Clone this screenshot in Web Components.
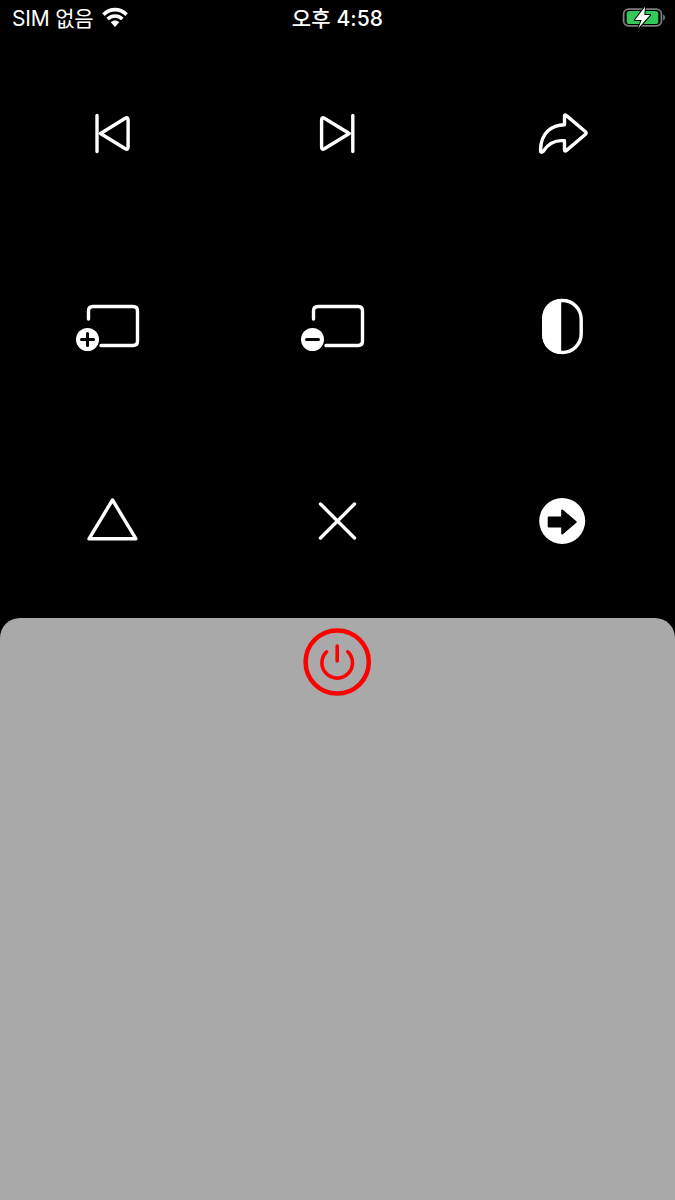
<!DOCTYPE html>
<html lang="ko">
<head>
<meta charset="utf-8">
<title>Remote</title>
<style>
html,body{margin:0;height:100%;background:#000}
body{font-family:Inter,"Noto Sans CJK KR",sans-serif;overflow:hidden}
remote-app{height:1200px}
</style>
</head>
<body>
<remote-app>
  <status-bar slot="status" carrier="SIM 없음" time="오후 4:58"></status-bar>
  <icon-grid slot="grid">
    <icon-key name="prev"></icon-key>
    <icon-key name="next"></icon-key>
    <icon-key name="share"></icon-key>
    <icon-key name="plus"></icon-key>
    <icon-key name="minus"></icon-key>
    <icon-key name="contrast"></icon-key>
    <icon-key name="triangle"></icon-key>
    <icon-key name="cross"></icon-key>
    <icon-key name="go"></icon-key>
  </icon-grid>
  <power-panel slot="panel"></power-panel>
</remote-app>
<script>
/* ---- page frame: status bar, key grid, bottom sheet ---- */
class RemoteApp extends HTMLElement {
  connectedCallback() {
    if (this.shadowRoot) return;
    const root = this.attachShadow({ mode: 'open' });
    root.innerHTML = `<style>
:host{display:grid;grid-template-rows:36px 582px 1fr;background:#000}
</style><slot name="status"></slot><slot name="grid"></slot><slot name="panel"></slot>`;
  }
}
customElements.define('remote-app', RemoteApp);

class StatusBar extends HTMLElement {
  connectedCallback() {
    if (this.shadowRoot) return;
    const root = this.attachShadow({ mode: 'open' });
    root.innerHTML = `<style>
:host{display:grid;grid-template-columns:1fr auto 1fr;align-items:center;height:36px;padding:0 9px;color:#fff;font-size:21px;box-sizing:border-box}
.l{display:flex;align-items:center;gap:8px;letter-spacing:-.2px;margin-left:3px}
.l span,.c{position:relative;top:-1px}
.c{font-weight:500;letter-spacing:.1px}
.r{justify-self:end;display:flex;align-items:center}
svg{display:block}
</style>
<div class="l"><span>${this.getAttribute('carrier')}</span>
<svg width="28" height="24" viewBox="0 0 28 24"><path d="M2.400 8.600C9.400 2 18.600 2 25.600 8.600M6.600 13C11 9 17 9 21.400 13" fill="none" stroke="#fff" stroke-width="3.600"/><path d="M9.800 16.200C12.400 14 15.600 14 18.200 16.200L14 21Z" fill="#fff"/></svg></div>
<div class="c">${this.getAttribute('time')}</div>
<div class="r"><svg width="44" height="24" viewBox="0 0 44 24"><rect x="1.600" y="3.200" width="37.800" height="16.600" rx="5" fill="none" stroke="#7d7d7d" stroke-width="1.800"/><rect x="4.700" y="5" width="31.600" height="13" rx="2.800" fill="#34c759"/><path d="M41 8.500c1.600.5 2.200 1.700 2.200 3s-.6 2.500-2.200 3z" fill="#6a6a6a"/><path d="M23 .7 13 14H19.700L16.300 22.300 28 9H22.300Z" fill="#fff" stroke="#000" stroke-width="2" stroke-linejoin="round" paint-order="stroke"/></svg></div>`;
  }
}
customElements.define('status-bar', StatusBar);

class IconGrid extends HTMLElement {
  connectedCallback() {
    if (this.shadowRoot) return;
    const root = this.attachShadow({ mode: 'open' });
    root.innerHTML = `<style>
:host{display:grid;grid-template-columns:repeat(3,1fr);grid-auto-rows:194px}
</style><slot></slot>`;
  }
}
customElements.define('icon-grid', IconGrid);

/* every glyph is drawn around 0,0 = the middle of its cell */
var ICONS = {
  prev: '<path class="s" d="M-16-17.500V18.500M-12.500 .5 12.300-14.700Q15.100-16.300 15.100-13.100V14.100Q15.100 17.300 12.300 15.700Z"/>',
  next: '<path class="s" d="M14.800-17.500V18.500M11.300 .5-13.600-14.700Q-16.400-16.300-16.400-13.100V14.100Q-16.400 17.300-13.600 15.700Z"/>',
  share: '<path class="s" d="M1.500-16.500Q1.500-19 3.500-17.400L22.500-1.200Q23.800 0 22.500 1.200L3.500 17.400Q1.500 19 1.500 16.500V7.800C-8 6.800-15 11-19.500 18Q-22.500 21-22.500 17C-22-1-11-8 1.500-8.200Z"/>',
  plus: '<path class="s" d="M-24.500-8V-16Q-24.500-20.500-20-20.500H20Q24.500-20.500 24.500-16V14Q24.500 18.500 20 18.500H-12"/><circle cx="-25.500" cy="12.500" r="11.500" fill="#fff"/><path d="M-25.500 6.500V18.500M-31.500 12.500H-19.500" stroke="#000" stroke-width="3" fill="none" stroke-linecap="round"/>',
  minus: '<path class="s" d="M-24.500-8V-16Q-24.500-20.500-20-20.500H20Q24.500-20.500 24.500-16V14Q24.500 18.500 20 18.500H-12"/><circle cx="-25.500" cy="12.500" r="11.500" fill="#fff"/><path d="M-31.500 12.500H-19.500" stroke="#000" stroke-width="3" fill="none" stroke-linecap="round"/>',
  contrast: '<rect class="s" x="-19.300" y="-26.500" width="37.500" height="52" rx="18.700"/><path d="M-1.800-28C-13-28-20.800-20-20.800-8.500V7.500C-20.800 19-13 27-1.800 27Z" fill="#fff"/>',
  triangle: '<path class="s" d="M-.5-21-24 17.800H23Z"/>',
  cross: '<path class="s" d="M-17.500-17 16.500 17M16.500-17-17.500 17"/>',
  go: '<circle cx="-.8" cy="0" r="23" fill="#fff"/><path d="M-14.300-3.500H-.8V-10.500L12.700 1-.8 12.500V5.500H-14.300Z" fill="#000" stroke="#000" stroke-width="2" stroke-linejoin="round"/>'
};
class IconKey extends HTMLElement {
  connectedCallback() {
    if (this.shadowRoot) return;
    const root = this.attachShadow({ mode: 'open' });
    root.innerHTML = `<style>
:host{display:flex;align-items:center;justify-content:center}
svg{display:block;overflow:visible}
.s{fill:none;stroke:#fff;stroke-width:3.400;stroke-linecap:round;stroke-linejoin:round}
</style><svg width="70" height="70" viewBox="-35 -35 70 70">${ICONS[this.getAttribute('name')]}</svg>`;
  }
}
customElements.define('icon-key', IconKey);

class PowerPanel extends HTMLElement {
  connectedCallback() {
    if (this.shadowRoot) return;
    const root = this.attachShadow({ mode: 'open' });
    root.innerHTML = `<style>
:host{display:flex;justify-content:center;align-items:flex-start;padding-top:9px;background:#a9a9a9;border-radius:20px 20px 0 0}
svg{display:block}
</style><svg width="70" height="70" viewBox="-34.200 -35 70 70" fill="none" stroke="#f00" stroke-linecap="round">
<circle r="31.600" stroke-width="4.500"/>
<path d="M-10.600-10.200A15.300 15.300 0 1 0 10.600-10.200M0-16V-1" stroke-width="3.600"/></svg>`;
  }
}
customElements.define('power-panel', PowerPanel);
</script>
</body>
</html>
